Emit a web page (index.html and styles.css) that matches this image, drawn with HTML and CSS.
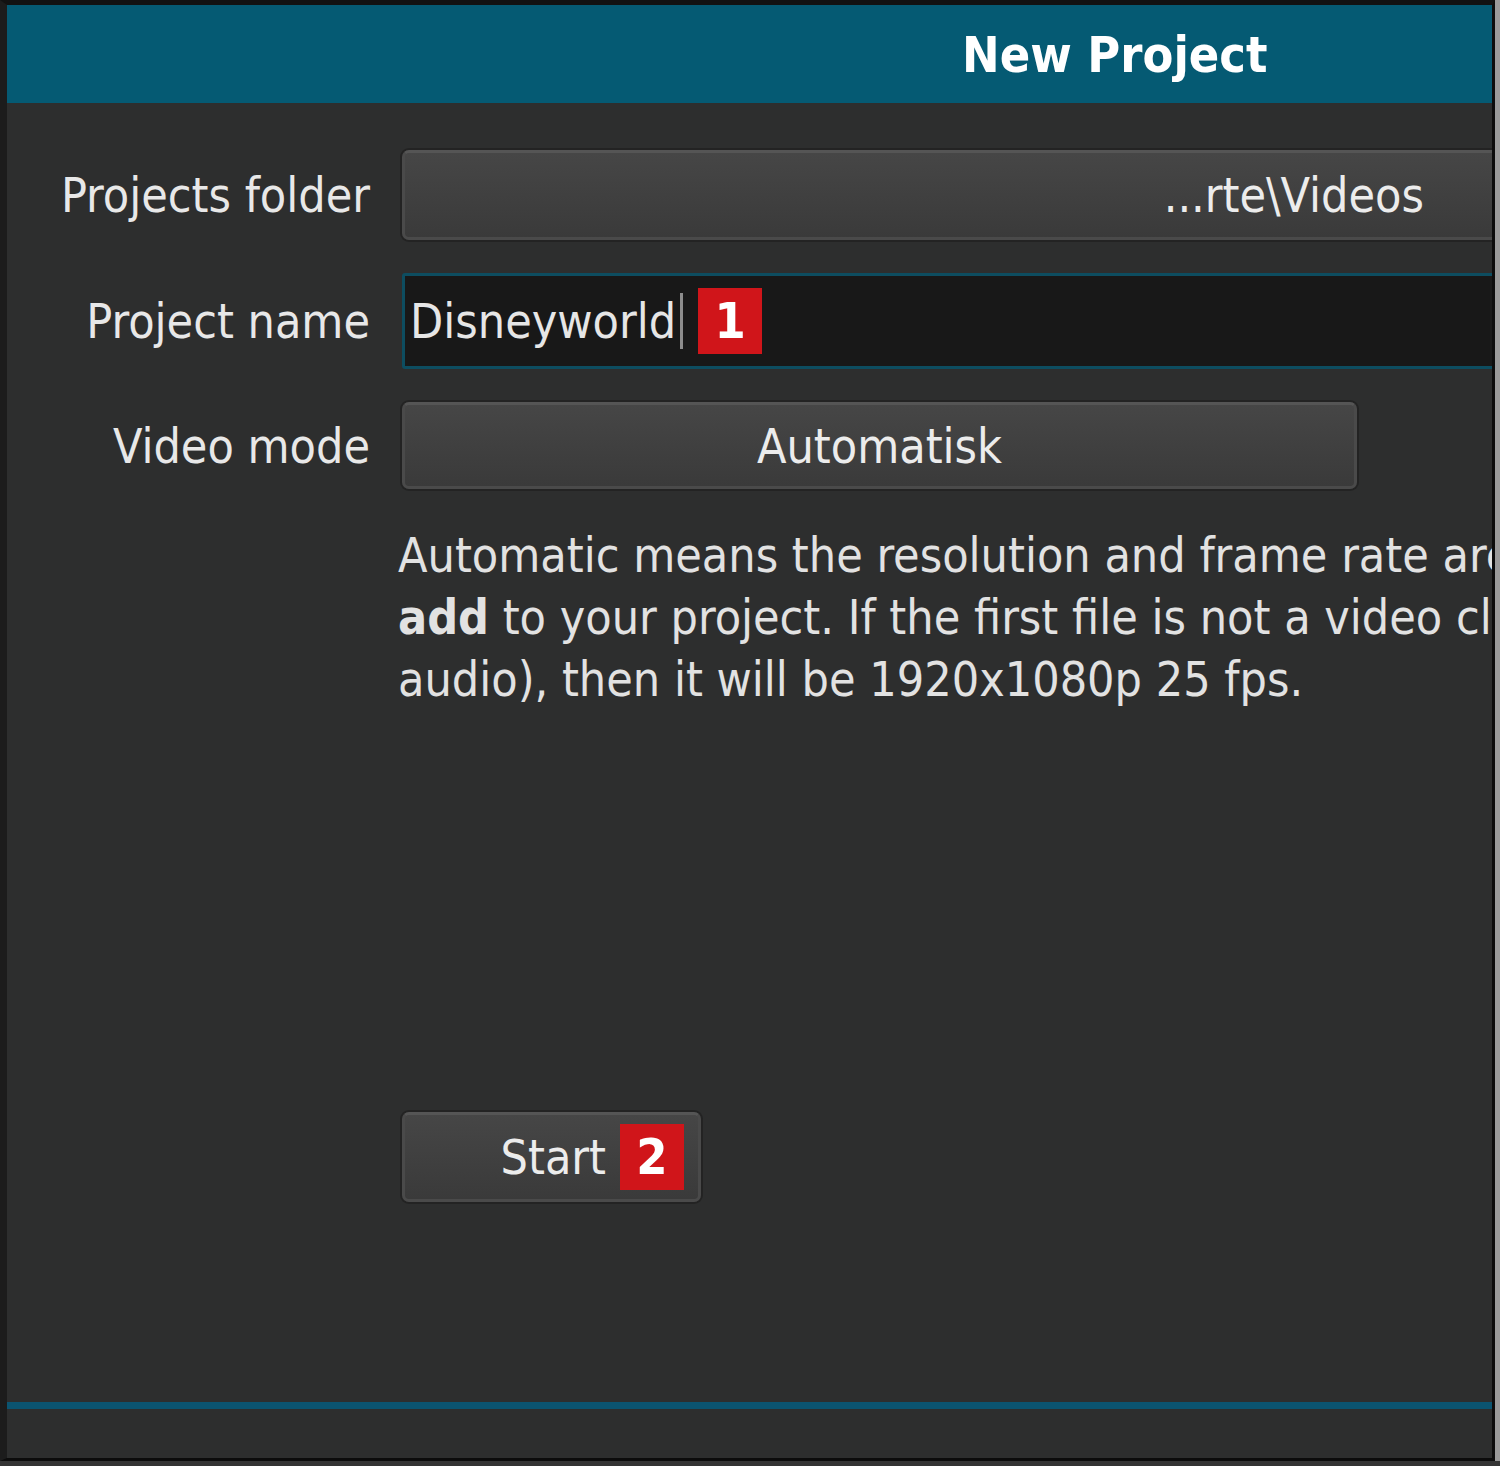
FILE: index.html
```html
<!DOCTYPE html>
<html>
<head>
    <meta charset="UTF-8">
    <title>New Project</title>
    <link rel="stylesheet" href="styles.css">
</head>
<body>
    <div class="window">
        <div class="title-bar">
            <h1>New Project</h1>
        </div>

        <div class="content">
            <div class="form">
                <label class="label">Projects folder</label>
                <button class="field btn folder-btn">...rte\Videos</button>

                <label class="label">Project name</label>
                <div class="field name-input">
                    <span class="value">Disneyworld</span><span class="caret"></span>
                    <span class="badge">1</span>
                </div>

                <label class="label">Video mode</label>
                <button class="btn mode-btn">Automatisk</button>

                <div class="spacer"></div>
                <p class="hint">
                    Automatic means the resolution and frame rate are based on the <b>first</b> file you<br>
                    <b>add</b> to your project. If the first file is not a video clip (for example, image or<br>
                    audio), then it will be 1920x1080p 25 fps.
                </p>

                <div class="spacer"></div>
                <button class="btn start-btn">Start <span class="badge">2</span></button>
            </div>
        </div>

        <div class="footer"></div>
    </div>
</body>
</html>
```

FILE: styles.css
```css
* {
    box-sizing: border-box;
    margin: 0;
    padding: 0;
}
html {
    background: #343434;
}
body {
    font-family: "DejaVu Sans Condensed", "DejaVu Sans", sans-serif;
    color: #e6e6e6;
    height: 1466px;
    overflow: hidden;
}
.window {
    width: 1495px;
    height: 1461px;
    background: #2d2e2e;
    border-top: 5px solid #121212;
    border-left: 7px solid #1c1c1c;
    border-right: 3px solid #0c0c0c;
    border-bottom: 3px solid #0c0c0c;
    box-shadow: 5px 0 0 #9a9a9a;
    display: flex;
    flex-direction: column;
    overflow: hidden;
}
.title-bar {
    height: 98px;
    background: #055a73;
    flex-shrink: 0;
    padding-left: 955px;
    padding-top: 2px;
    display: flex;
    align-items: center;
}
.title-bar h1 {
    font-size: 50px;
    font-weight: bold;
    color: #fff;
    white-space: nowrap;
}
.content {
    flex: 1;
    padding-top: 47px;
}
.form {
    display: grid;
    grid-template-columns: 363px 1200px;
    column-gap: 32px;
    row-gap: 33px;
    align-items: center;
    font-size: 48px;
}
.label {
    text-align: right;
    white-space: nowrap;
    color: #e8e8e8;
}
.btn {
    font-family: inherit;
    font-size: 48px;
    color: #ececec;
    background: linear-gradient(#464646, #3a3a3a);
    border: 3px solid #4a4a4a;
    border-top-color: #555;
    border-radius: 7px;
    box-shadow: 0 0 0 2px #232323;
    white-space: nowrap;
}
.folder-btn {
    height: 90px;
    text-align: right;
    padding-right: 175px;
}
.name-input {
    height: 96px;
    background: #181818;
    border: 3px solid #0d4d60;
    border-radius: 3px;
    display: flex;
    align-items: center;
    padding-left: 5px;
}
.caret {
    display: inline-block;
    width: 3px;
    height: 56px;
    background: #8c8c8c;
    margin-left: 4px;
}
.badge {
    display: inline-flex;
    align-items: center;
    justify-content: center;
    width: 64px;
    height: 66px;
    background: #d0151a;
    color: #fff;
    font-weight: bold;
    font-size: 50px;
}
.name-input .badge {
    margin-left: 15px;
}
.mode-btn {
    height: 87px;
    width: 955px;
}
.spacer {
    height: 1px;
}
.hint {
    margin-top: 2px;
    font-size: 48px;
    line-height: 62px;
    white-space: nowrap;
    color: #e2e2e2;
    margin-left: -4px;
}
.start-btn {
    margin-top: 369px;
    width: 299px;
    height: 90px;
    display: flex;
    align-items: center;
    justify-content: flex-end;
    padding-right: 14px;
    gap: 14px;
}
.footer {
    height: 56px;
    flex-shrink: 0;
    border-top: 7px solid #0b5470;
}
```
